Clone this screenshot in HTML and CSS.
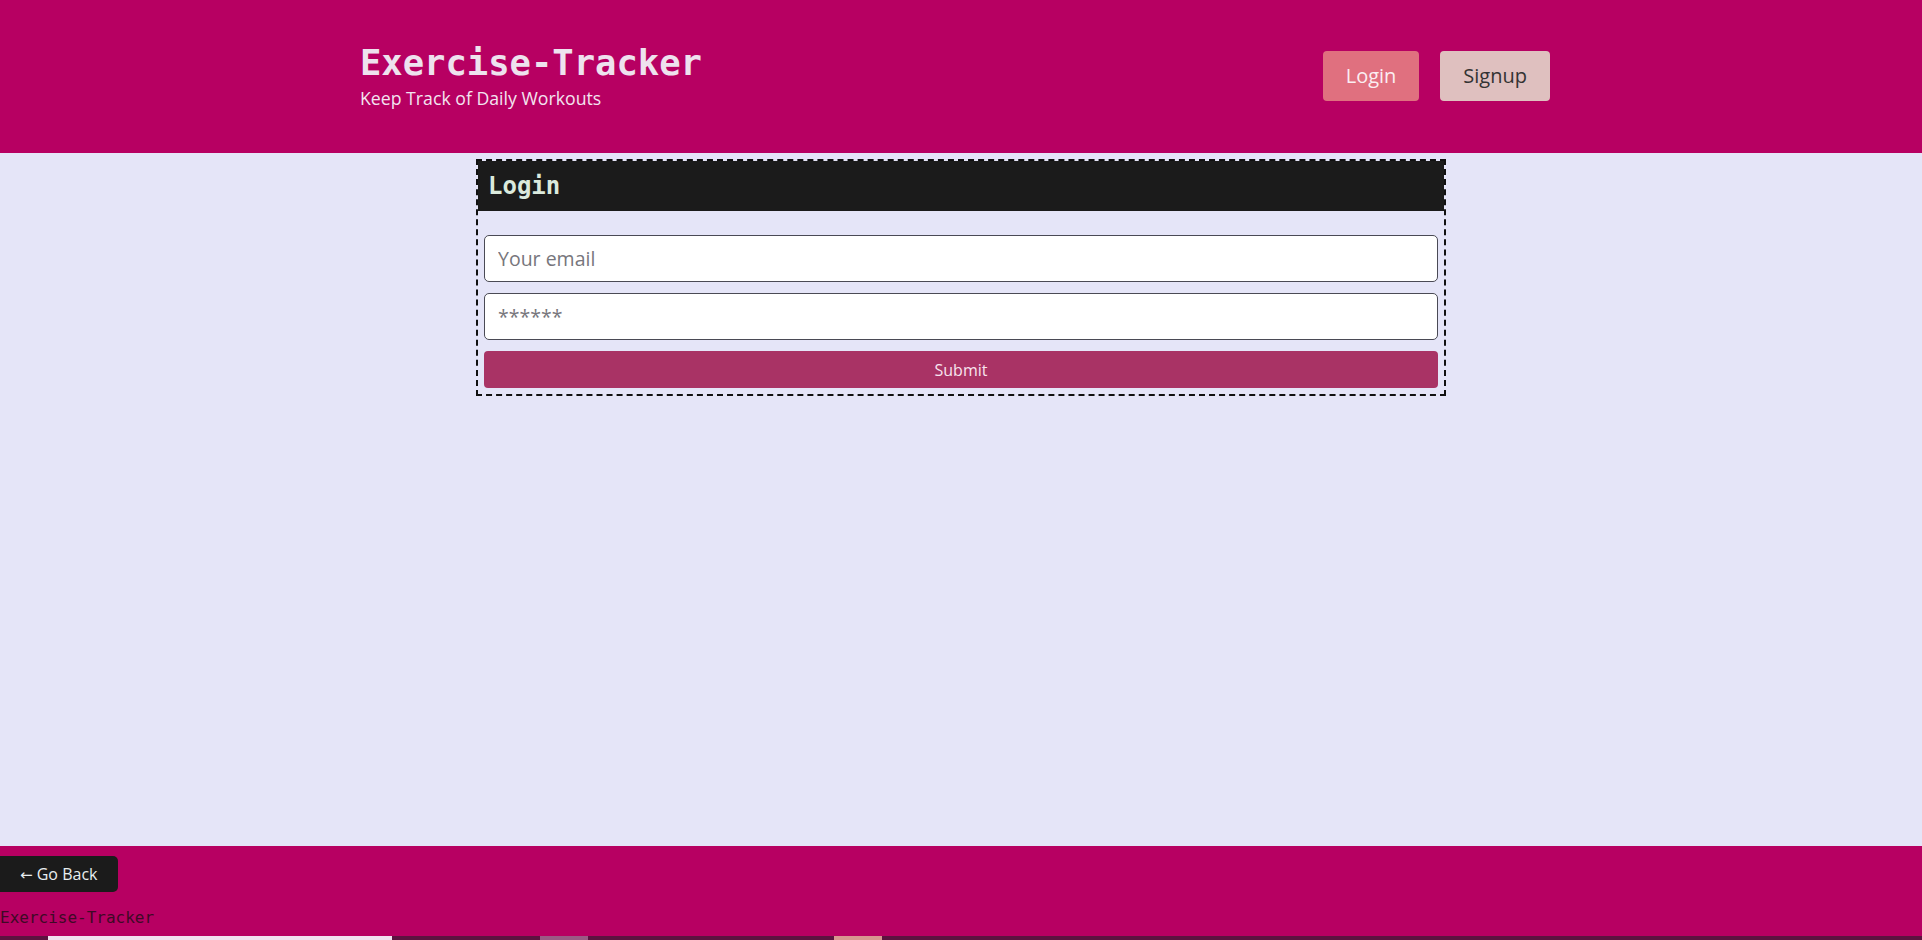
FILE: index.html
```html
<!DOCTYPE html>
<html lang="en">
<head>
<meta charset="utf-8">
<title>Exercise-Tracker</title>
<link rel="stylesheet" href="styles.css">
</head>
<body>
<div class="page">
  <header class="site-header">
    <div class="header-inner">
      <div class="brand">
        <h1 class="brand-title">Exercise-Tracker</h1>
        <p class="brand-sub">Keep Track of Daily Workouts</p>
      </div>
      <nav class="nav">
        <a class="nav-btn nav-login" href="#">Login</a>
        <a class="nav-btn nav-signup" href="#">Signup</a>
      </nav>
    </div>
  </header>
  <main class="main">
    <section class="card">
      <h2 class="card-title">Login</h2>
      <form class="card-form">
        <input class="field" type="email" placeholder="Your email">
        <input class="field" type="text" placeholder="******">
        <button class="submit" type="button">Submit</button>
      </form>
    </section>
  </main>
  <footer class="site-footer">
    <button class="back-btn" type="button"><span class="arrow">←</span> Go Back</button>
    <div class="footer-brand">Exercise-Tracker</div>
  </footer>
  <div class="strip">
    <span class="seg seg-dark s1"></span>
    <span class="seg seg-light s2"></span>
    <span class="seg seg-dark s3"></span>
    <span class="seg seg-mid s4"></span>
    <span class="seg seg-dark s5"></span>
    <span class="seg seg-pink s6"></span>
    <span class="seg seg-dark s7"></span>
  </div>
</div>
</body>
</html>
```

FILE: styles.css
```css
* { box-sizing: border-box; }
html, body { margin: 0; padding: 0; }
body {
  font-family: "Open Sans", "Noto Sans", sans-serif;
  background: #e5e5f8;
  overflow: hidden;
}
.page {
  height: 100vh;
  display: flex;
  flex-direction: column;
}
.site-header {
  background: #b70062;
  height: 153px;
  flex: 0 0 auto;
  display: flex;
  align-items: center;
}
.header-inner {
  width: 1200px;
  margin: 0 auto;
  padding: 0 10px 0 0;
  display: flex;
  align-items: center;
  justify-content: space-between;
  position: relative;
  left: -1px;
}
.brand-title {
  margin: 0;
  font-family: "DejaVu Sans Mono", monospace;
  font-weight: bold;
  font-size: 35.5px;
  line-height: 42.6px;
  color: #eee2ee;
}
.brand-sub {
  margin: 0;
  font-size: 17.7px;
  line-height: 26px;
  color: #f3e4f0;
}
.nav {
  display: flex;
  gap: 21px;
  position: relative;
  top: -1px;
}
.nav-btn {
  display: block;
  text-decoration: none;
  font-size: 20px;
  line-height: 26px;
  padding: 12px 23px;
  border-radius: 4px;
}
.nav-login {
  background: #e0707f;
  color: #fbeef2;
}
.nav-signup {
  background: #dfc0bf;
  color: #333;
}
.main {
  flex: 1 1 auto;
  display: flex;
  justify-content: center;
  align-items: flex-start;
  padding-top: 6px;
}
.card {
  width: 970px;
  border: 2px dashed #111;
}
.card-title {
  margin: 0;
  background: #1b1b1b;
  color: #dbeadd;
  font-family: "DejaVu Sans Mono", monospace;
  font-weight: bold;
  font-size: 24px;
  line-height: 50px;
  height: 50px;
  padding: 0 10px;
}
.card-form {
  padding: 24px 6px 6px;
  display: flex;
  flex-direction: column;
  gap: 11px;
}
.field {
  display: block;
  width: 100%;
  height: 47px;
  font-family: "Open Sans", "Noto Sans", sans-serif;
  font-size: 19.5px;
  line-height: 29px;
  padding: 8px 13px;
  border: 1px solid #4a4a55;
  border-radius: 5px;
  background: #fff;
  color: #222;
  outline: none;
}
.field::placeholder {
  color: #77767c;
}
.submit {
  display: block;
  width: 100%;
  height: 37px;
  border: 0;
  border-radius: 4px;
  background: #a93365;
  color: #f8e4ee;
  font-family: "Open Sans", "Noto Sans", sans-serif;
  font-size: 16px;
  line-height: 24px;
  padding: 0;
}
.site-footer {
  flex: 0 0 auto;
  background: #b70062;
  height: 90px;
  padding-top: 10px;
}
.back-btn {
  display: block;
  border: 0;
  background: #1b1b1b;
  color: #e8eef0;
  font-family: "Open Sans", "Noto Sans", sans-serif;
  font-size: 16px;
  line-height: 24px;
  padding: 6px 18px 6px 20px;
  width: 118px;
  height: 36px;
  border-radius: 0 5px 5px 0;
  text-align: left;
  white-space: nowrap;
}
.arrow {
  font-family: "DejaVu Sans", sans-serif;
  font-size: 15px;
}
.footer-brand {
  margin-top: 13.5px;
  font-family: "DejaVu Sans Mono", monospace;
  font-size: 16px;
  line-height: 24px;
  color: #3e0a26;
}
.strip {
  flex: 0 0 4px;
  height: 4px;
  display: flex;
}
.seg { display: block; height: 4px; }
.seg-dark { background: #5c1340; }
.seg-light { background: #f1e2ef; }
.seg-mid { background: #9a5a84; }
.seg-pink { background: #d8958f; }
.s1 { width: 48px; }
.s2 { width: 344px; }
.s3 { width: 148px; }
.s4 { width: 48px; }
.s5 { width: 246px; }
.s6 { width: 48px; }
.s7 { flex: 1; }
```
